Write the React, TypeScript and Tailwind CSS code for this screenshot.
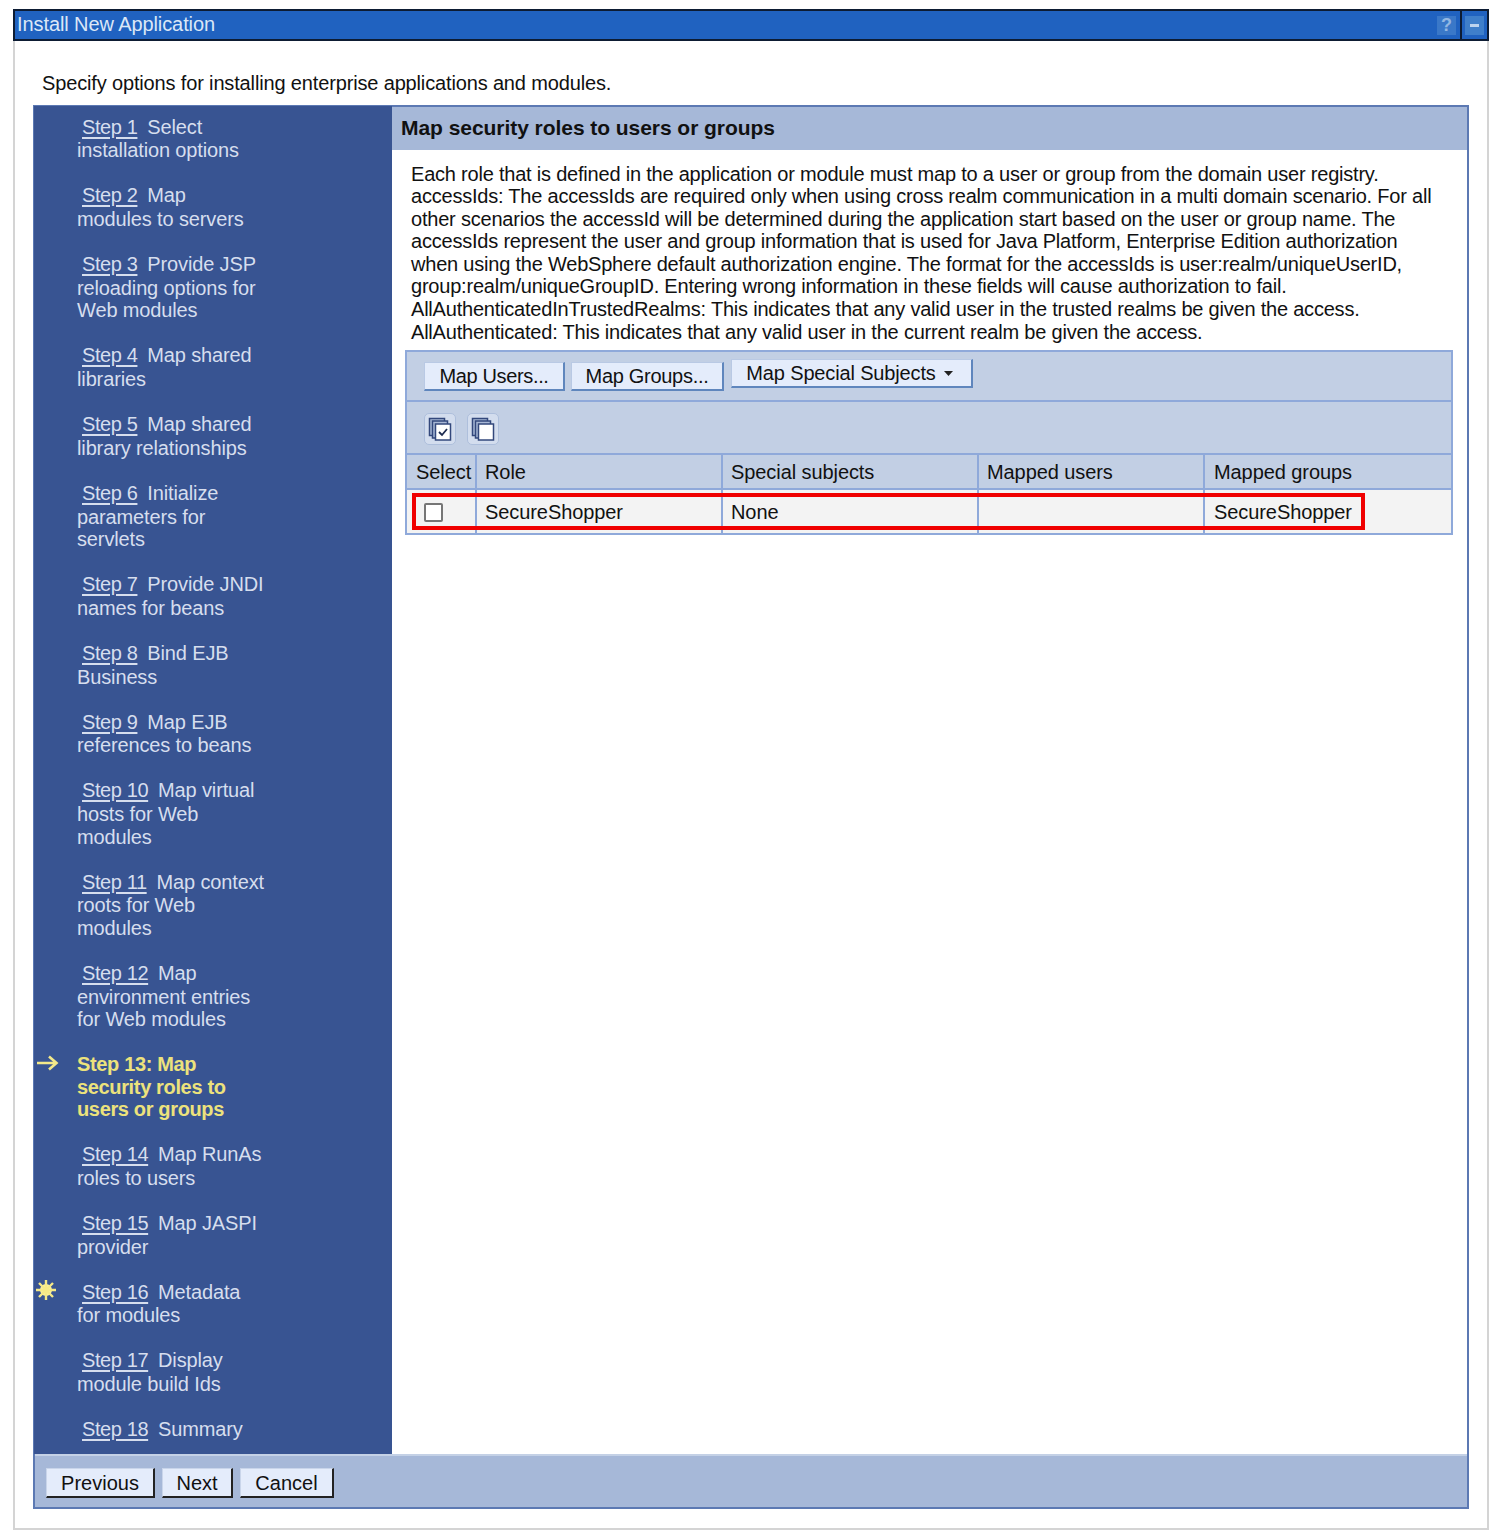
const steps = [
  { label: "Step 1", lines: ["Select", "installation options"] },
  { label: "Step 2", lines: ["Map", "modules to servers"] },
  { label: "Step 3", lines: ["Provide JSP", "reloading options for", "Web modules"] },
  { label: "Step 4", lines: ["Map shared", "libraries"] },
  { label: "Step 5", lines: ["Map shared", "library relationships"] },
  { label: "Step 6", lines: ["Initialize", "parameters for", "servlets"] },
  { label: "Step 7", lines: ["Provide JNDI", "names for beans"] },
  { label: "Step 8", lines: ["Bind EJB", "Business"] },
  { label: "Step 9", lines: ["Map EJB", "references to beans"] },
  { label: "Step 10", lines: ["Map virtual", "hosts for Web", "modules"] },
  { label: "Step 11", lines: ["Map context", "roots for Web", "modules"] },
  { label: "Step 12", lines: ["Map", "environment entries", "for Web modules"] },
  { label: "Step 13: Map", lines: ["security roles to", "users or groups"], current: true },
  { label: "Step 14", lines: ["Map RunAs", "roles to users"] },
  { label: "Step 15", lines: ["Map JASPI", "provider"] },
  { label: "Step 16", lines: ["Metadata", "for modules"], star: true },
  { label: "Step 17", lines: ["Display", "module build Ids"] },
  { label: "Step 18", lines: ["Summary"] },
];

const description = [
  "Each role that is defined in the application or module must map to a user or group from the domain user registry.",
  "accessIds: The accessIds are required only when using cross realm communication in a multi domain scenario. For all",
  "other scenarios the accessId will be determined during the application start based on the user or group name. The",
  "accessIds represent the user and group information that is used for Java Platform, Enterprise Edition authorization",
  "when using the WebSphere default authorization engine. The format for the accessIds is user:realm/uniqueUserID,",
  "group:realm/uniqueGroupID. Entering wrong information in these fields will cause authorization to fail.",
  "AllAuthenticatedInTrustedRealms: This indicates that any valid user in the trusted realms be given the access.",
  "AllAuthenticated: This indicates that any valid user in the current realm be given the access.",
];

function PagesIcon({ checked }: { checked?: boolean }) {
  return (
    <svg width="26" height="26" viewBox="0 0 26 26" fill="none">
      <rect x="2.5" y="2.5" width="15" height="17" fill="#a9b8d6" stroke="#33487c" strokeWidth="1.5" />
      <rect x="5.5" y="5" width="15" height="17" fill="#a9b8d6" stroke="#33487c" strokeWidth="1.5" />
      <rect x="8.5" y="8" width="15" height="16" fill="white" stroke="#33487c" strokeWidth="1.5" />
      {checked && <path d="M12 16l3 3 5-6" stroke="#1c2b50" strokeWidth="1.8" />}
    </svg>
  );
}

function StepItem({ step }: { step: (typeof steps)[number] }) {
  if (step.current) {
    return (
      <div className="relative pl-[43px] text-[20px] leading-[22.5px] font-bold tracking-[-0.35px] text-[#ece27c]">
        <svg className="absolute left-[2px] top-[1px]" width="23" height="18" viewBox="0 0 23 18" fill="none">
          <path d="M1 9h19M13 2.5l7.5 6.5-7.5 6.5" stroke="#f3e98a" strokeWidth="2.6" />
        </svg>
        <div>{step.label}</div>
        {step.lines.map((l) => (
          <div key={l}>{l}</div>
        ))}
      </div>
    );
  }
  const [first, ...rest] = step.lines;
  return (
    <div className="relative pl-[43px] text-[20px] leading-[22.5px] tracking-[-0.13px] text-[#d6deee]">
      {step.star && (
        <svg className="absolute left-0 top-[-3px] blur-[0.6px]" width="24" height="24" viewBox="0 0 24 24" fill="none">
          <circle cx="12" cy="12" r="6" fill="#f9ef9a" />
          <path d="M12 2v20M2 12h20M5 5l14 14M19 5L5 19" stroke="#f5e987" strokeWidth="2.4" />
        </svg>
      )}
      <div className="h-[23.75px] whitespace-pre pl-[5px]">
        <span className="mr-[-1px] underline underline-offset-[3px] tracking-[-0.4px]">{step.label}</span>
        {"  " + first}
      </div>
      {rest.map((l) => (
        <div key={l}>{l}</div>
      ))}
    </div>
  );
}

function ToolButton({ className, children }: { className: string; children: React.ReactNode }) {
  return (
    <button
      type="button"
      className={`flex h-[29px] items-center justify-center border border-t-[#b9c9e4] border-l-[#b9c9e4] border-r-2 border-b-2 border-r-[#5f86bd] border-b-[#5f86bd] bg-[#e4ecfb] text-[20px] text-[#111] ${className}`}
    >
      {children}
    </button>
  );
}

function FooterButton({ label, className }: { label: string; className: string }) {
  return (
    <button
      type="button"
      className={`flex h-[30px] items-center justify-center border-r-2 border-b-2 border-r-[#222] border-b-[#222] border-t border-l border-t-[#c9d5ea] border-l-[#c9d5ea] bg-[#e4ecfb] text-[20px] text-[#111] ${className}`}
    >
      {label}
    </button>
  );
}

const headers = ["Select", "Role", "Special subjects", "Mapped users", "Mapped groups"];
const cells = ["", "SecureShopper", "None", "", "SecureShopper"];

export default function App() {
  return (
    <div
      className="flex h-[1536px] w-[1498px] flex-col bg-white pb-[6px] pl-[13px] pr-[9px] pt-[9px] text-[#111]"
      style={{ fontFamily: '"Liberation Sans", Arial, sans-serif' }}
    >
      <div className="flex h-[32px] items-center justify-between border-2 border-[#0d1c33] bg-[#2062c0] pl-[2px] text-[20px] tracking-[-0.09px] text-[#dbe7f7]">
        <span className="pb-[2px]">Install New Application</span>
        <div className="flex h-full items-center">
          <div className="mr-[4px] flex h-[19px] w-[19px] items-center justify-center bg-[#3a78c8] text-[18px] font-bold leading-none text-[#93b7e2]">
            ?
          </div>
          <div className="flex h-full w-[27px] items-center justify-center border-l-2 border-[#0d1c33]">
            <div className="flex h-[19px] w-[19px] items-center justify-center bg-[#3f7fca]">
              <div className="h-[3px] w-[9px] bg-[#bcd3ee]" />
            </div>
          </div>
        </div>
      </div>

      <div className="flex min-h-0 flex-1 flex-col border-x-2 border-b-2 border-[#d4d4d4] pb-[19px] pl-[18px] pr-[18px]">
        <p className="mb-[10px] mt-[31px] pl-[9px] text-[20px] leading-[22.5px] tracking-[-0.15px]">
          Specify options for installing enterprise applications and modules.
        </p>

        <div className="flex min-h-0 flex-1 flex-col border-2 border-[#5c79b3]">
          <div className="flex min-h-0 flex-1">
            <nav className="flex w-[358px] shrink-0 flex-col gap-[22.5px] bg-[#385492] pt-[10px] -ml-[1px] -mt-[1px]">
              {steps.map((s) => (
                <StepItem key={s.label} step={s} />
              ))}
            </nav>

            <main className="flex min-w-0 flex-1 flex-col bg-white">
              <div className="flex h-[43px] items-center bg-[#a6b8d8] pl-[9px] text-[21px] font-bold tracking-[-0.05px] text-[#111]">
                Map security roles to users or groups
              </div>
              <div className="pl-[19px] pt-[13px] text-[20px] leading-[22.6px] tracking-[-0.21px]">
                {description.map((l) => (
                  <div key={l} className="whitespace-nowrap">
                    {l}
                  </div>
                ))}
              </div>

              <div className="relative ml-[13px] mr-[14px] mt-[7px] border-2 border-[#8fa9da] bg-[#c2cfe4]">
                <div className="flex h-[50px] items-start gap-[6px] border-b-2 border-[#8fa9da] pl-[17px]">
                  <ToolButton className="mt-[10px] w-[141px] tracking-[-0.35px]">Map Users...</ToolButton>
                  <ToolButton className="mt-[10px] w-[153px] tracking-[-0.3px]">Map Groups...</ToolButton>
                  <ToolButton className="ml-[1px] mt-[7px] w-[242px] gap-[8px] pr-[4px] tracking-[-0.15px]">
                    <span>Map Special Subjects</span>
                    <svg width="9" height="5" viewBox="0 0 9 5">
                      <path d="M0 0h9L4.5 5z" fill="#222" />
                    </svg>
                  </ToolButton>
                </div>
                <div className="flex h-[53px] items-center gap-[11px] border-b-2 border-[#8fa9da] pl-[17px] pt-[2px]">
                  <div className="flex h-[32px] w-[32px] items-center justify-center rounded-[5px] border border-[#aebfdc] bg-[#d3ddee]">
                    <PagesIcon checked />
                  </div>
                  <div className="flex h-[32px] w-[32px] items-center justify-center rounded-[5px] border border-[#aebfdc] bg-[#d3ddee]">
                    <PagesIcon />
                  </div>
                </div>
                <div className="grid h-[35px] grid-cols-[68px_246px_256px_226px_1fr] items-stretch border-b-2 border-[#8fa9da] text-[20px] tracking-[-0.08px]">
                  {headers.map((h, i) => (
                    <div
                      key={h}
                      className={`flex items-center ${i === 0 ? "pl-[9px]" : i === 4 ? "border-l-2 border-[#8fa9da] pl-[9px]" : "border-l-2 border-[#8fa9da] pl-[8px]"}`}
                    >
                      {h}
                    </div>
                  ))}
                </div>
                <div className="grid h-[43px] grid-cols-[68px_246px_256px_226px_1fr] items-stretch bg-[#f3f3f3] text-[20px] tracking-[-0.08px]">
                  {cells.map((c, i) => (
                    <div
                      key={i}
                      className={`flex items-center ${i === 0 ? "pl-[17px] pt-[2px]" : i === 4 ? "border-l-2 border-[#8fa9da] pl-[9px]" : "border-l-2 border-[#8fa9da] pl-[8px]"}`}
                    >
                      {i === 0 ? (
                        <span className="h-[19px] w-[19px] rounded-[2px] border-2 border-[#767676] bg-white" />
                      ) : (
                        c
                      )}
                    </div>
                  ))}
                </div>
                <div className="absolute left-[5px] top-[141px] h-[37px] w-[953px] border-[4px] border-[#f00000]" />
              </div>
            </main>
          </div>

          <div className="flex h-[53px] shrink-0 items-center gap-[7px] border-t-2 border-[#c4d1e6] bg-[#a6b8d8] pl-[11px] pt-[3px]">
            <FooterButton label="Previous" className="w-[109px]" />
            <FooterButton label="Next" className="w-[71px]" />
            <FooterButton label="Cancel" className="w-[94px]" />
          </div>
        </div>
      </div>
    </div>
  );
}
